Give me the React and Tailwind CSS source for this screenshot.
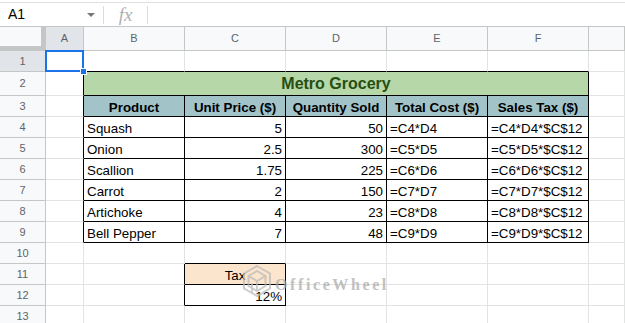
import React from "react";

const COLS = ["A", "B", "C", "D", "E", "F", ""];

const items = [
    ["Squash", "5", "50", "=C4*D4", "=C4*D4*$C$12"],
    ["Onion", "2.5", "300", "=C5*D5", "=C5*D5*$C$12"],
    ["Scallion", "1.75", "225", "=C6*D6", "=C6*D6*$C$12"],
    ["Carrot", "2", "150", "=C7*D7", "=C7*D7*$C$12"],
    ["Artichoke", "4", "23", "=C8*D8", "=C8*D8*$C$12"],
    ["Bell Pepper", "7", "48", "=C9*D9", "=C9*D9*$C$12"],
];

const headers = ["Product", "Unit Price ($)", "Quantity Sold", "Total Cost ($)", "Sales Tax ($)"];

// plain grid cell, light gridlines on right/bottom
const Cell = ({ className = "", children }) => (
    <div className={`flex items-end pb-[1px] px-[3px] leading-[15px] text-[13.33px] text-black whitespace-nowrap overflow-hidden border-r border-b border-[#e2e3e3] ${className}`}>
        {children}
    </div>
);

const RowHead = ({ n, active }) => (
    <div className={`flex items-center justify-center text-[11px] text-[#5f6368] border-r border-b border-[#c4c7c5] ${active ? "bg-[#e1e5ea] text-[#1f1f1f]" : "bg-[#f8f9fa]"}`}>
        {n}
    </div>
);

const Watermark = () => (
    <div className="absolute left-[241px] top-[264px] flex items-center gap-[2px] pointer-events-none opacity-70">
        <svg width="32" height="36" viewBox="0 0 32 36" fill="none" stroke="#b9b9b9" strokeWidth="2">
            <path d="M16 2 L29 9.5 L29 24.5 L16 32 L3 24.5 L3 9.5 Z" />
            <path d="M16 7 L24.5 12 L24.5 22 L16 27 L7.5 22 L7.5 12 Z" />
            <path d="M7.5 12 L16 17 L24.5 12" />
            <path d="M16 17 L16 27" />
            <path d="M11 19.5 L11 29" />
        </svg>
        <span className="text-[16px] leading-none tracking-[2.6px] text-[#a8a8a8] font-bold mt-[6px]" style={{ fontFamily: '"Liberation Serif", serif' }}>
            OfficeWheel
        </span>
    </div>
);

export default function App() {
    return (
        <div className="relative w-[625px] h-[323px] overflow-hidden bg-white" style={{ fontFamily: '"Liberation Sans", Arial, sans-serif' }}>
            {/* formula bar */}
            <div className="h-[27px] pt-[2px]">
                <div className="h-full flex items-center border-t border-b border-[#e0e0e0] border-b-[#c4c7c5]">
                    <div className="w-[103px] flex items-center pl-[8px] pr-[8px]">
                        <span className="text-[14px] text-black flex-1">A1</span>
                        <span className="w-0 h-0 border-l-[4px] border-r-[4px] border-t-[4px] border-l-transparent border-r-transparent border-t-[#777]" />
                    </div>
                    <div className="w-px h-[18px] bg-[#dadce0]" />
                    <div className="w-[43px] flex justify-center">
                        <span className="italic text-[19px] text-[#b0b0b0] leading-none" style={{ fontFamily: '"Liberation Serif", serif' }}>fx</span>
                    </div>
                    <div className="w-px h-[18px] bg-[#dadce0]" />
                </div>
            </div>

            {/* sheet grid */}
            <div className="grid grid-cols-[46px_38px_101px_101px_101px_101px_101px_1fr] grid-rows-[24px_21px_24px_repeat(11,21px)]">
                {/* column headers */}
                <div className="bg-[#f8f9fa] border-r-[5px] border-b-[5px] border-[#c4c7c5]" />
                {COLS.map((c, i) => (
                    <div key={i} className={`flex items-center justify-center text-[11px] text-[#5f6368] border-r border-b border-[#c4c7c5] ${i === 0 ? "bg-[#e1e5ea] text-[#1f1f1f]" : "bg-[#f8f9fa]"}`}>
                        {c}
                    </div>
                ))}

                {/* row 1 */}
                <RowHead n={1} active />
                <Cell className="relative overflow-visible">
                    <div className="absolute -left-px -top-px w-[39px] h-[22px] border-2 border-[#1a73e8]" />
                    <div className="absolute right-[-4px] bottom-[-4px] w-[7px] h-[7px] bg-[#1a73e8] border border-white z-10" />
                </Cell>
                <Cell className="border-b-black" />
                <Cell className="border-b-black" />
                <Cell className="border-b-black" />
                <Cell className="border-b-black" />
                <Cell className="border-b-black" />
                <Cell />

                {/* row 2 title */}
                <RowHead n={2} />
                <Cell className="border-r-black" />
                <div className="col-span-5 flex items-center justify-center bg-[#b6d7a8] border-r border-b border-black text-[16px] font-bold text-[#274e13] leading-[18px] pt-[1px]">
                    Metro Grocery
                </div>
                <Cell />

                {/* row 3 headers */}
                <RowHead n={3} />
                <Cell className="border-r-black" />
                {headers.map(h => (
                    <Cell key={h} className="justify-center bg-[#a2c4c9] font-bold text-[#0c232a] border-r-black border-b-black">
                        {h}
                    </Cell>
                ))}
                <Cell />

                {/* data rows */}
                {items.map((row, r) => (
                    <React.Fragment key={row[0]}>
                        <RowHead n={r + 4} />
                        <Cell className="border-r-black" />
                        <Cell className="border-r-black border-b-black">{row[0]}</Cell>
                        <Cell className="justify-end border-r-black border-b-black">{row[1]}</Cell>
                        <Cell className="justify-end border-r-black border-b-black">{row[2]}</Cell>
                        <Cell className="border-r-black border-b-black">{row[3]}</Cell>
                        <Cell className="border-r-black border-b-black">{row[4]}</Cell>
                        <Cell />
                    </React.Fragment>
                ))}

                {/* row 10 */}
                <RowHead n={10} />
                <Cell />
                <Cell />
                <Cell className="border-b-black" />
                <Cell />
                <Cell />
                <Cell />
                <Cell />

                {/* row 11 */}
                <RowHead n={11} />
                <Cell />
                <Cell className="border-r-black" />
                <Cell className="justify-center bg-[#fce5cd] text-[#7a4a0a] border-r-black border-b-black">Tax</Cell>
                <Cell />
                <Cell />
                <Cell />
                <Cell />

                {/* row 12 */}
                <RowHead n={12} />
                <Cell />
                <Cell className="border-r-black" />
                <Cell className="justify-end border-r-black border-b-black">12%</Cell>
                <Cell />
                <Cell />
                <Cell />
                <Cell />

                {/* row 13 */}
                <RowHead n={13} />
                <Cell />
                <Cell />
                <Cell />
                <Cell />
                <Cell />
                <Cell />
                <Cell />
            </div>

            <Watermark />
        </div>
    );
}
